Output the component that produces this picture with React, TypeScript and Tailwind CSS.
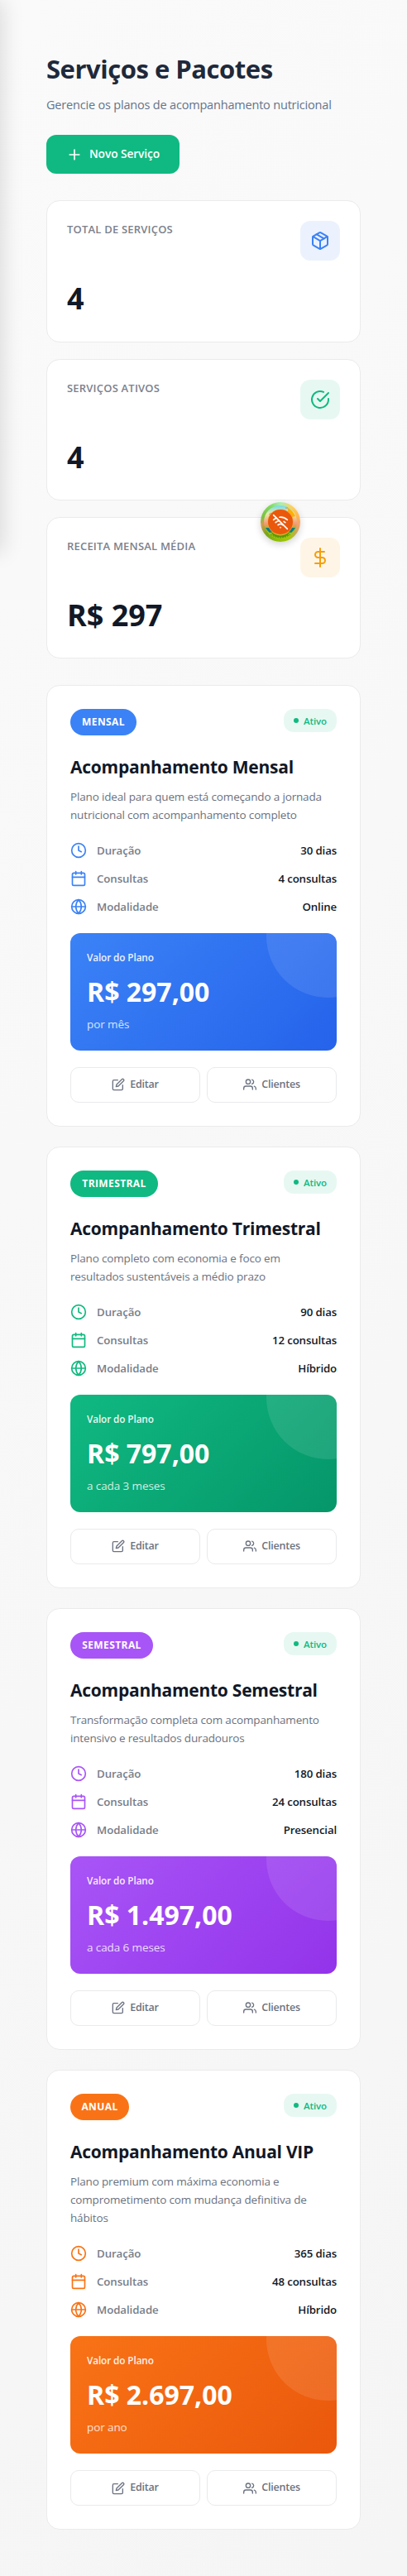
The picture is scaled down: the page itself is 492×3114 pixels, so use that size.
import type { ReactNode } from 'react';
import {
  FiCalendar,
  FiCheckCircle,
  FiClock,
  FiDollarSign,
  FiEdit,
  FiGlobe,
  FiPackage,
  FiPlus,
  FiUsers,
} from 'react-icons/fi';
import { WifiOff } from 'lucide-react';

type Plan = {
  badge: string;
  title: string;
  description: string;
  duration: string;
  visits: string;
  mode: string;
  price: string;
  period: string;
  badgeColor: string;
  iconColor: string;
  gradient: string;
};

const plans: Plan[] = [
  {
    badge: 'MENSAL',
    title: 'Acompanhamento Mensal',
    description: 'Plano ideal para quem está começando a jornada nutricional com acompanhamento completo',
    duration: '30 dias',
    visits: '4 consultas',
    mode: 'Online',
    price: 'R$ 297,00',
    period: 'por mês',
    badgeColor: 'bg-[#3b82f6] w-20',
    iconColor: 'text-[#3b82f6]',
    gradient: 'bg-[linear-gradient(135deg,#3b82f6_0%,#2563eb_100%)]',
  },
  {
    badge: 'TRIMESTRAL',
    title: 'Acompanhamento Trimestral',
    description: 'Plano completo com economia e foco em resultados sustentáveis a médio prazo',
    duration: '90 dias',
    visits: '12 consultas',
    mode: 'Híbrido',
    price: 'R$ 797,00',
    period: 'a cada 3 meses',
    badgeColor: 'bg-[#10b981] w-[106px]',
    iconColor: 'text-[#10b981]',
    gradient: 'bg-[linear-gradient(135deg,#10b981_0%,#059669_100%)]',
  },
  {
    badge: 'SEMESTRAL',
    title: 'Acompanhamento Semestral',
    description: 'Transformação completa com acompanhamento intensivo e resultados duradouros',
    duration: '180 dias',
    visits: '24 consultas',
    mode: 'Presencial',
    price: 'R$ 1.497,00',
    period: 'a cada 6 meses',
    badgeColor: 'bg-[#a855f7] w-[100px]',
    iconColor: 'text-[#a855f7]',
    gradient: 'bg-[linear-gradient(135deg,#a855f7_0%,#9333ea_100%)]',
  },
  {
    badge: 'ANUAL',
    title: 'Acompanhamento Anual VIP',
    description: 'Plano premium com máxima economia e comprometimento com mudança definitiva de hábitos',
    duration: '365 dias',
    visits: '48 consultas',
    mode: 'Híbrido',
    price: 'R$ 2.697,00',
    period: 'por ano',
    badgeColor: 'bg-[#f97316] w-[71px]',
    iconColor: 'text-[#f97316]',
    gradient: 'bg-[linear-gradient(135deg,#f97316_0%,#ea580c_100%)]',
  },
];

function StatCard({ label, value, tint, icon }: { label: string; value: string; tint: string; icon: ReactNode }) {
  return (
    <div className="h-[171.3px] rounded-2xl border border-[#ebebec] bg-white p-6">
      <div className="flex h-12 items-start justify-between">
        <span className="text-[13px] font-semibold leading-5 tracking-[0.2px] text-[#7b818c]">{label}</span>
        <div className={`flex size-12 items-center justify-center rounded-xl ${tint}`}>{icon}</div>
      </div>
      <div className="mt-[21px] text-4xl font-bold leading-[50px] text-[#111827]">{value}</div>
    </div>
  );
}

function Row({ icon, label, value }: { icon: ReactNode; label: string; value: string }) {
  return (
    <div className="flex h-5 items-center justify-between">
      <div className="flex items-center gap-3">
        {icon}
        <span className="text-[13.25px] font-semibold leading-5 tracking-[-0.08px] text-[#777d89]">{label}</span>
      </div>
      <span className="text-[13.25px] font-semibold leading-5 tracking-[-0.14px] text-[#111827]">{value}</span>
    </div>
  );
}

function ActionButton({ icon, label }: { icon: ReactNode; label: string }) {
  return (
    <button className="flex h-[42.5px] flex-1 items-center justify-center gap-1.5 rounded-[10px] border border-[#e9eaec] text-[12.5px] font-semibold tracking-[-0.2px] text-[#6b7280]">
      {icon}
      {label}
    </button>
  );
}

function PlanCard({ plan }: { plan: Plan }) {
  return (
    <article className="rounded-2xl border border-[#ebebec] bg-white p-7">
      <div className="flex h-8 items-start justify-between">
        <span
          className={`flex h-8 items-center justify-center whitespace-nowrap rounded-2xl text-xs font-bold tracking-[0.4px] text-white ${plan.badgeColor}`}
        >
          {plan.badge}
        </span>
        <span className="flex h-7 w-16 items-center justify-center gap-1.5 rounded-xl bg-[#e7f8f2] text-[11.5px] font-semibold tracking-[-0.1px] text-[#10b981]">
          <i className="size-1.5 rounded-full bg-[#10b981]" />
          Ativo
        </span>
      </div>
      <h2 className="mt-[23px] whitespace-nowrap text-[21px] font-bold leading-[30px] tracking-[-0.25px] text-[#111827]">
        {plan.title}
      </h2>
      <p className="mt-[9.5px] max-w-[308px] text-[13.5px] leading-[22.2px] tracking-[-0.16px] text-[#6b7280]">
        {plan.description}
      </p>
      <div className="mt-[22px] flex flex-col gap-3.5">
        <Row icon={<FiClock size={20} className={plan.iconColor} />} label="Duração" value={plan.duration} />
        <Row icon={<FiCalendar size={20} className={plan.iconColor} />} label="Consultas" value={plan.visits} />
        <Row icon={<FiGlobe size={20} className={plan.iconColor} />} label="Modalidade" value={plan.mode} />
      </div>
      <div className={`relative mt-[22px] h-[142px] overflow-hidden rounded-xl p-5 text-white ${plan.gradient}`}>
        <div className="absolute -right-16 -top-[71px] size-[149px] rounded-full bg-white/10" />
        <div className="text-[11.75px] font-semibold leading-[18px] tracking-[-0.1px] opacity-90">Valor do Plano</div>
        <div className="mt-[13px] text-[32px] font-bold leading-10">{plan.price}</div>
        <div className="mt-2 text-[13.5px] leading-[22px] tracking-[-0.1px] opacity-80">{plan.period}</div>
      </div>
      <div className="mt-5 flex gap-2">
        <ActionButton icon={<FiEdit size={16} />} label="Editar" />
        <ActionButton icon={<FiUsers size={16} />} label="Clientes" />
      </div>
    </article>
  );
}

function OfflineBadge() {
  return (
    <div className="absolute left-[315px] top-[607px] flex size-12 items-center justify-center rounded-full bg-[conic-gradient(#a7efb4_0deg,#ffd15a_35deg,#ffb84f_70deg,#f2a071_100deg,#c3ab55_125deg,#a5c80d_150deg,#8fbe05_190deg,#76a51c_230deg,#d69a4f_262deg,#7cc142_285deg,#82d75c_325deg,#a7efb4_360deg)] shadow-[0_3px_8px_rgba(0,0,0,0.18)]">
      <svg viewBox="0 0 48 48" className="absolute inset-0 size-12">
        <defs>
          <linearGradient id="scene" x1="0" y1="0" x2="0" y2="1">
            <stop offset="0" stopColor="#72d9ee" />
            <stop offset="0.25" stopColor="#e7edaa" />
            <stop offset="0.55" stopColor="#f69a78" />
            <stop offset="0.7" stopColor="#a3b51d" />
            <stop offset="1" stopColor="#a9d40b" />
          </linearGradient>
        </defs>
        <circle cx="24" cy="24" r="20" fill="url(#scene)" />
        <path d="M33 7a20 20 0 0 1 9 10l-4 1-5-5z" fill="#ffae00" />
        <path d="M6 31h5l3 5-3 1a20 20 0 0 1-5-6zM42 31h-5l-3 5 3 1a20 20 0 0 0 5-6z" fill="#087e82" />
        <path d="M11 34q13 13 26 0l-4 6q-9 5-18 0z" fill="#5e960a" />
        <path d="M12 39q12 8 24 0" fill="none" stroke="#315d12" strokeWidth="0.7" strokeDasharray="2 1" />
        <path d="M10 15l3-2M30 7h3" stroke="#df8448" strokeWidth="1" />
      </svg>
      <div className="relative flex size-[30px] items-center justify-center rounded-full bg-[#ea580c] shadow-[0_0_0_0.6px_#f6a04d]">
        <WifiOff size={20} strokeWidth={2} className="text-white" />
      </div>
    </div>
  );
}

export default function App() {
  return (
    <div className="relative min-h-[3114px] w-full overflow-hidden bg-[linear-gradient(135deg,#fafafa_0%,#f5f5f5_100%)] font-['Open_Sans','Noto_Sans',sans-serif]">
      <div className="absolute -left-70 top-0 h-[668px] w-70 shadow-[4px_0_24px_rgba(0,0,0,0.12)]" />
      <main className="px-14 pt-14 pb-14">
        <header>
          <h1 className="mt-[7px] text-[31px] font-bold leading-10 tracking-[-0.47px] text-[#1e293b]">Serviços e Pacotes</h1>
          <p className="mt-3 whitespace-nowrap text-[14.5px] leading-6 tracking-[-0.19px] text-[#64748b]">
            Gerencie os planos de acompanhamento nutricional
          </p>
          <button className="mt-6 flex h-[47px] w-[161px] items-center justify-center gap-2 rounded-xl bg-[#10b981] text-[13.75px] font-semibold tracking-[-0.1px] text-white">
            <FiPlus size={20} />
            Novo Serviço
          </button>
        </header>
        <section className="mt-[32.3px] flex flex-col gap-5">
          <StatCard
            label="TOTAL DE SERVIÇOS"
            value="4"
            tint="bg-[#ebf2fe]"
            icon={<FiPackage size={24} className="text-[#3b82f6]" />}
          />
          <StatCard
            label="SERVIÇOS ATIVOS"
            value="4"
            tint="bg-[#e7f8f2]"
            icon={<FiCheckCircle size={24} className="text-[#10b981]" />}
          />
          <StatCard
            label="RECEITA MENSAL MÉDIA"
            value="R$ 297"
            tint="bg-[#fef5e7]"
            icon={<FiDollarSign size={24} className="text-[#f59e0b]" />}
          />
        </section>
        <section className="mt-8 flex flex-col gap-[24.6px]">
          {plans.map((plan) => (
            <PlanCard key={plan.badge} plan={plan} />
          ))}
        </section>
      </main>
      <OfflineBadge />
    </div>
  );
}
